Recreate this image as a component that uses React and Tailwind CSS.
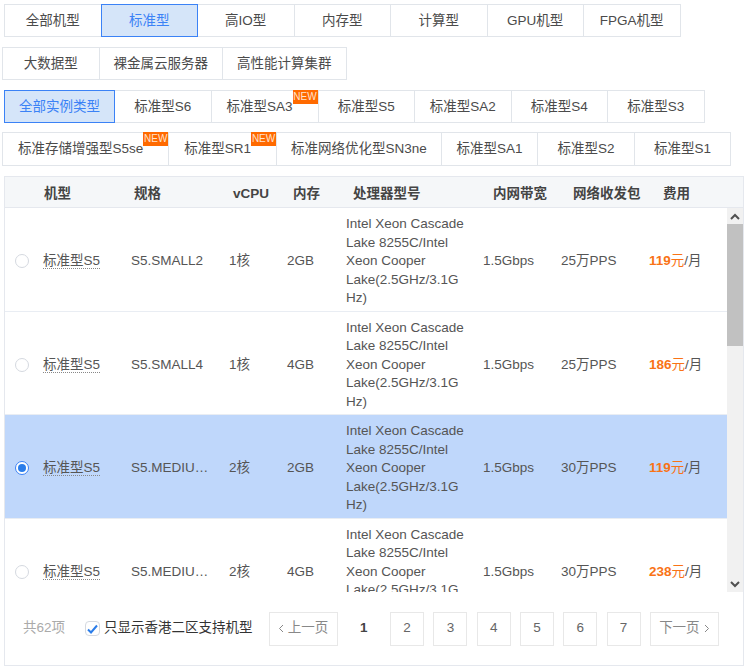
import React from "react";

const NewTag = () => (
  <span className="absolute -top-px right-0 flex h-3.5 w-6.25 items-center justify-center bg-[#ff6a00] text-[10px] leading-none text-[#ffe3cf]">
    NEW
  </span>
);

function Tab({ label, active, tag }) {
  const base =
    "relative -ml-px flex h-full shrink-0 items-center justify-center whitespace-nowrap border pt-px first:ml-0 ";
  const pad = tag ? "pl-3.75 pr-6.25 " : "min-w-[97.5px] px-3.5 ";
  const look = active
    ? "z-10 border-[#3b82f6] bg-[#d5e5f9] text-[#3b82f6]"
    : "border-[#e1e5ea] bg-white text-[#4b4b4b]";
  return (
    <div className={pad + base + look}>
      {label}
      {tag && <NewTag />}
    </div>
  );
}

function TabRow({ items, className }) {
  return (
    <div className={"flex " + className}>
      {items.map((t) => (
        <Tab key={t.label} {...t} />
      ))}
    </div>
  );
}

const row1 = [
  { label: "全部机型" },
  { label: "标准型", active: true },
  { label: "高IO型" },
  { label: "内存型" },
  { label: "计算型" },
  { label: "GPU机型" },
  { label: "FPGA机型" },
];
const row2 = [{ label: "大数据型" }, { label: "裸金属云服务器" }, { label: "高性能计算集群" }];
const row3 = [
  { label: "全部实例类型", active: true },
  { label: "标准型S6" },
  { label: "标准型SA3", tag: true },
  { label: "标准型S5" },
  { label: "标准型SA2" },
  { label: "标准型S4" },
  { label: "标准型S3" },
];
const row4 = [
  { label: "标准存储增强型S5se", tag: true },
  { label: "标准型SR1", tag: true },
  { label: "标准网络优化型SN3ne" },
  { label: "标准型SA1" },
  { label: "标准型S2" },
  { label: "标准型S1" },
];

const rows = [
  { spec: "S5.SMALL2", cpu: "1核", mem: "2GB", pps: "25万PPS", price: "119" },
  { spec: "S5.SMALL4", cpu: "1核", mem: "4GB", pps: "25万PPS", price: "186" },
  { spec: "S5.MEDIUM2", cpu: "2核", mem: "2GB", pps: "30万PPS", price: "119", selected: true },
  { spec: "S5.MEDIUM4", cpu: "2核", mem: "4GB", pps: "30万PPS", price: "238" },
];

function Radio({ on }) {
  return (
    <span
      className={
        "flex h-3.5 w-3.5 items-center justify-center rounded-full border bg-white " +
        (on ? "border-[#3b82f6]" : "border-[#d5d9e0]")
      }
    >
      {on && <span className="h-2 w-2 rounded-full bg-[#2b7de9]" />}
    </span>
  );
}

function Row({ r }) {
  return (
    <div
      className={
        "flex items-center border-b border-[#e9edf3] pt-1.75 pb-0.75 text-[#555] " +
        (r.selected ? "bg-[#bfd7fb]" : "bg-white")
      }
    >
      <div className="w-9.5 shrink-0 pl-2.5">
        <Radio on={r.selected} />
      </div>
      <div className="w-22 shrink-0">
        <span className="border-b border-dotted border-[#888]">标准型S5</span>
      </div>
      <div className="w-24.5 shrink-0 truncate pr-4">{r.spec}</div>
      <div className="w-14.5 shrink-0">{r.cpu}</div>
      <div className="w-14.75 shrink-0">{r.mem}</div>
      <div className="w-34.25 shrink-0 break-words pr-4 leading-[18.5px]">
        Intel Xeon Cascade Lake 8255C/Intel Xeon Cooper Lake(2.5GHz/3.1GHz)
      </div>
      <div className="w-19.5 shrink-0">1.5Gbps</div>
      <div className="w-22 shrink-0">{r.pps}</div>
      <div className="shrink-0">
        <span className="font-bold text-[#f97316]">{r.price}</span>
        <span className="text-[#f97316]">元</span>/月
      </div>
    </div>
  );
}

const PageBtn = ({ children }) => (
  <div className="flex h-8.5 w-8.5 items-center justify-center border border-[#e8e8e8] text-[#666]">
    {children}
  </div>
);

export default function App() {
  return (
    <div className="h-[670px] w-[750px] overflow-hidden bg-white pt-1 text-[13.5px] font-['Liberation_Sans','Noto_Sans_CJK_SC',sans-serif]">
      <TabRow items={row1} className="mb-2.5 ml-1 h-8.25" />
      <TabRow items={row2} className="mb-2.5 ml-0.5 h-8.25" />
      <TabRow items={row3} className="mb-2.25 ml-1 h-8.25" />
      <TabRow items={row4} className="mb-2.5 ml-0.5 h-8.5" />

      <div className="ml-1 flex h-122.5 w-185 flex-col border border-[#e5e8ee]">
        <div className="flex h-7.75 shrink-0 items-center border-b border-[#e5e8ee] bg-[#f5f7f9] pt-1 font-bold text-[#444]">
          <div className="w-9.75 shrink-0" />
          <div className="w-22.5 shrink-0">机型</div>
          <div className="w-24.75 shrink-0">规格</div>
          <div className="w-15 shrink-0">vCPU</div>
          <div className="w-15 shrink-0">内存</div>
          <div className="w-35 shrink-0">处理器型号</div>
          <div className="w-20 shrink-0">内网带宽</div>
          <div className="w-22.5 shrink-0">网络收发包</div>
          <div className="shrink-0">费用</div>
        </div>

        <div className="flex h-96 shrink-0">
          <div className="flex-1 overflow-hidden">
            {rows.map((r) => (
              <Row key={r.spec} r={r} />
            ))}
          </div>
          <div className="flex w-4 shrink-0 flex-col bg-[#f1f1f1]">
            <div className="flex h-4 items-center justify-center">
              <svg width="10" height="7" viewBox="0 0 10 7" fill="none" stroke="#505050" strokeWidth="2">
                <path d="M1 6l4-4 4 4" />
              </svg>
            </div>
            <div className="h-30.5 bg-[#c1c1c1]" />
            <div className="mt-auto flex h-4 items-center justify-center">
              <svg width="10" height="7" viewBox="0 0 10 7" fill="none" stroke="#505050" strokeWidth="2">
                <path d="M1 1l4 4 4-4" />
              </svg>
            </div>
          </div>
        </div>

        <div className="flex flex-1 items-center pl-4.5">
          <span className="w-11 text-[#aaa]">共62项</span>
          <span className="ml-4.5 flex h-3.75 w-3.75 items-center justify-center rounded-sm border border-[#d5d9e0] bg-white">
            <svg width="11" height="10" viewBox="0 0 11 10" fill="none" stroke="#2b7de9" strokeWidth="2">
              <path d="M1 5.5l3 3 6-7" />
            </svg>
          </span>
          <span className="ml-1 text-[#333]">只显示香港二区支持机型</span>
          <div className="ml-4 flex items-center gap-[9.3px]">
            <div className="flex h-8.5 w-17.25 items-center justify-center gap-1 border border-[#e8e8e8] text-[#888]">
              <svg width="6" height="9" viewBox="0 0 6 9" fill="none" stroke="#888" strokeWidth="1">
                <path d="M5 1L1.5 4.5 5 8" />
              </svg>
              上一页
            </div>
            <div className="flex h-8.5 w-8.5 items-center justify-center font-bold text-[#444]">1</div>
            {[2, 3, 4, 5, 6, 7].map((n) => (
              <PageBtn key={n}>{n}</PageBtn>
            ))}
            <div className="flex h-8.5 w-17.25 items-center justify-center gap-1 border border-[#e8e8e8] text-[#888]">
              下一页
              <svg width="6" height="9" viewBox="0 0 6 9" fill="none" stroke="#888" strokeWidth="1">
                <path d="M1 1l3.5 3.5L1 8" />
              </svg>
            </div>
          </div>
        </div>
      </div>
    </div>
  );
}
